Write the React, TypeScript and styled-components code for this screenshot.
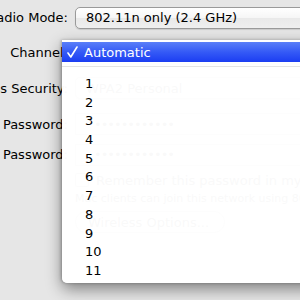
import React from "react";
import styled, { createGlobalStyle } from "styled-components";

const GlobalStyle = createGlobalStyle`
  html, body {
    margin: 0;
    padding: 0;
    background: #e6e6e6;
    overflow: hidden;
  }
  body {
    font-family: "DejaVu Sans", "Liberation Sans", sans-serif;
    font-size: 13px;
    color: #000;
  }
`;

const Sheet = styled.div`
  position: relative;
  width: 300px;
  height: 300px;
  overflow: hidden;
`;

const Form = styled.div`
  display: grid;
  grid-template-columns: 68px 1fr;
  grid-template-rows: 35px 35px 36px 36px 25px 26px 10px 38px;
  column-gap: 7px;
  align-items: center;
`;

const Label = styled.div`
  display: flex;
  justify-content: flex-end;
  white-space: nowrap;
`;

const PopUp = styled.div`
  height: 22px;
  width: 260px;
  box-sizing: border-box;
  display: flex;
  align-items: center;
  padding-left: 10px;
  border: 1px solid #9a9a9a;
  border-radius: 5px;
  background: linear-gradient(#ffffff 0%, #f6f6f6 48%, #e9e9e9 52%, #efefef 100%);
  box-shadow: 0 1px 1px rgba(0, 0, 0, 0.12);
  white-space: nowrap;
`;

const Field = styled.div`
  height: 22px;
  width: 240px;
  box-sizing: border-box;
  display: flex;
  align-items: center;
  padding-left: 18px;
  border: 1px solid #a5a5a5;
  background: #fff;
  letter-spacing: -1px;
`;

const Check = styled.div`
  display: flex;
  align-items: center;
  gap: 7px;
  white-space: nowrap;
  &::before {
    content: "";
    width: 12px;
    height: 12px;
    border: 1px solid #888;
    border-radius: 2px;
    background: #fff;
  }
`;

const Hint = styled.div`
  font-size: 11px;
  white-space: nowrap;
`;

const PushButton = styled.div`
  width: 150px;
  height: 22px;
  box-sizing: border-box;
  display: flex;
  align-items: center;
  padding-left: 12px;
  border: 1px solid #9a9a9a;
  border-radius: 11px;
  background: linear-gradient(#fff, #ececec);
`;

const Menu = styled.div`
  position: absolute;
  left: 62px;
  top: 40px;
  width: 260px;
  height: 243px;
  box-sizing: border-box;
  padding: 2px 0 3px;
  background: rgba(255, 255, 255, 0.975);
  border-radius: 0 0 5px 5px;
  box-shadow: 0 6px 16px rgba(0, 0, 0, 0.45), -1px 0 3px rgba(0, 0, 0, 0.25);
`;

const Selected = styled.div`
  height: 20px;
  display: flex;
  align-items: center;
  padding-left: 5px;
  gap: 6px;
  color: #fff;
  background: linear-gradient(#5a7ff8 0%, #355af6 50%, #1b3df2 100%);
`;

const Tick = styled.svg`
  width: 11px;
  height: 12px;
  flex: none;
`;

const Separator = styled.div`
  height: 1px;
  margin: 4px 0 8px;
  background: #e4e4e4;
`;

const Item = styled.div`
  height: 18.7px;
  line-height: 18.7px;
  padding-left: 23px;
`;

const channels = Array.from({ length: 11 }, (_, i) => i + 1);

const App = () => {
  return (
    <Sheet>
      <GlobalStyle />
      <Form>
        <Label>Radio Mode:</Label>
        <PopUp>802.11n only (2.4 GHz)</PopUp>
        <Label>Channel:</Label>
        <PopUp>Automatic</PopUp>
        <Label>Wireless Security:</Label>
        <PopUp>WPA2 Personal</PopUp>
        <Label>Password:</Label>
        <Field>••••••••••••</Field>
        <Label>Verify Password:</Label>
        <Field>••••••••••••</Field>
        <span />
        <Check>Remember this password in my keychain</Check>
        <span />
        <Hint>Mac clients can join this network using 802.1X</Hint>
        <span />
        <PushButton>Wireless Options...</PushButton>
      </Form>
      <Menu>
        <Selected>
          <Tick viewBox="0 0 11 12">
            <path
              d="M1 7 L3.8 11 L10 1"
              fill="none"
              stroke="#fff"
              strokeWidth="1.6"
              strokeLinecap="round"
              strokeLinejoin="round"
            />
          </Tick>
          <span>Automatic</span>
        </Selected>
        <Separator />
        {channels.map((c) => (
          <Item key={c}>{c}</Item>
        ))}
      </Menu>
    </Sheet>
  );
};

export default App;
